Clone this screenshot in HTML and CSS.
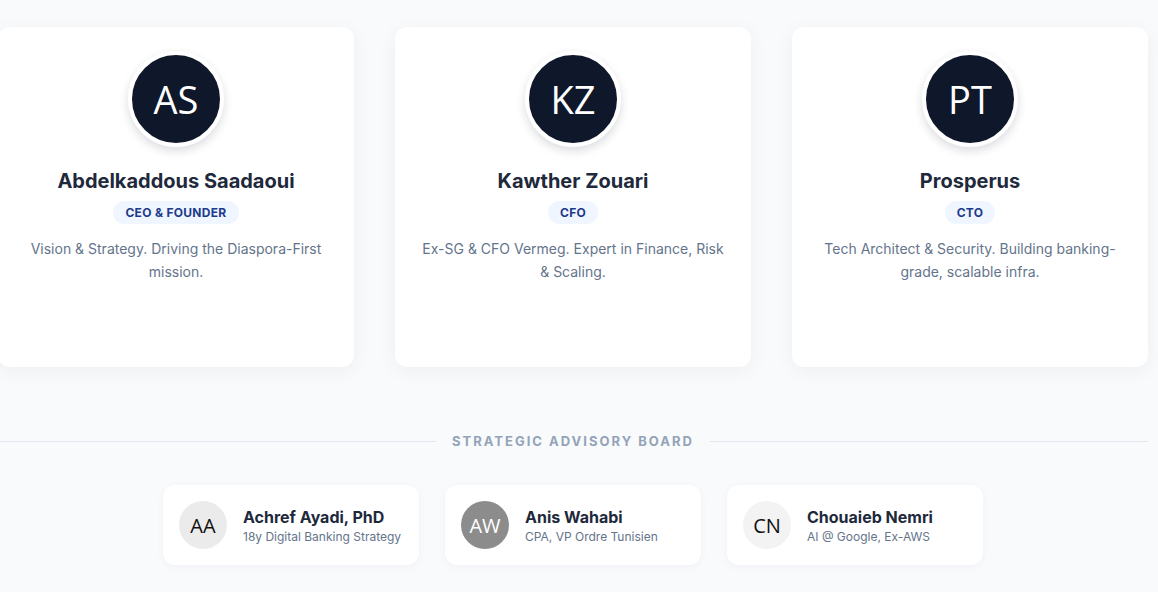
FILE: index.html
```html
<!DOCTYPE html>
<html>
<head>
<meta charset="utf-8">
<link rel="stylesheet" href="styles.css">
</head>
<body>
<main class="team">
  <section class="leaders">
    <article class="card">
      <div class="avatar">AS</div>
      <h3 class="name">Abdelkaddous Saadaoui</h3>
      <span class="badge">CEO &amp; FOUNDER</span>
      <p class="desc">Vision &amp; Strategy. Driving the Diaspora-First mission.</p>
    </article>
    <article class="card">
      <div class="avatar">KZ</div>
      <h3 class="name">Kawther Zouari</h3>
      <span class="badge">CFO</span>
      <p class="desc">Ex-SG &amp; CFO Vermeg. Expert in Finance, Risk &amp; Scaling.</p>
    </article>
    <article class="card">
      <div class="avatar">PT</div>
      <h3 class="name">Prosperus</h3>
      <span class="badge">CTO</span>
      <p class="desc">Tech Architect &amp; Security. Building banking-grade, scalable infra.</p>
    </article>
  </section>

  <div class="divider">
    <span class="line"></span>
    <span class="divider-text">STRATEGIC ADVISORY BOARD</span>
    <span class="line"></span>
  </div>

  <section class="advisors">
    <div class="advisor">
      <div class="mini mini-light">AA</div>
      <div class="info">
        <div class="a-name">Achref Ayadi, PhD</div>
        <div class="a-role">18y Digital Banking Strategy</div>
      </div>
    </div>
    <div class="advisor">
      <div class="mini mini-grey">AW</div>
      <div class="info">
        <div class="a-name">Anis Wahabi</div>
        <div class="a-role">CPA, VP Ordre Tunisien</div>
      </div>
    </div>
    <div class="advisor">
      <div class="mini mini-pale">CN</div>
      <div class="info">
        <div class="a-name">Chouaieb Nemri</div>
        <div class="a-role">AI @ Google, Ex-AWS</div>
      </div>
    </div>
  </section>
</main>
</body>
</html>
```

FILE: styles.css
```css
* { box-sizing: border-box; }
html, body { margin: 0; padding: 0; }
body {
  background: #f8fafc;
  font-family: Inter, "Liberation Sans", sans-serif;
  overflow: hidden;
  height: 592px;
}
.team {
  width: 1150px;
  margin-left: -2px;
  padding-top: 27px;
}
.leaders {
  display: grid;
  grid-template-columns: repeat(3, 1fr);
  gap: 41px;
}
.card {
  background: #ffffff;
  border-radius: 12px;
  height: 340px;
  padding: 24px 24px;
  display: flex;
  flex-direction: column;
  align-items: center;
  box-shadow: 0 4px 20px rgba(15, 23, 42, 0.05);
}
.avatar {
  width: 96px;
  height: 96px;
  border-radius: 50%;
  border: 4px solid #ffffff;
  background: #0f172a;
  color: #ffffff;
  font-family: "Open Sans", "Noto Sans", sans-serif;
  font-size: 38px;
  display: flex;
  align-items: center;
  justify-content: center;
  box-shadow: 0 4px 10px rgba(15, 23, 42, 0.15);
}
.name {
  margin: 20px 0 0;
  font-size: 20px;
  line-height: 28px;
  font-weight: 700;
  color: #1e293b;
}
.badge {
  margin-top: 6px;
  background: #eff6ff;
  color: #1e3a8a;
  font-size: 12px;
  font-weight: 700;
  line-height: 15px;
  padding: 4px 12px;
  border-radius: 999px;
  letter-spacing: 0.3px;
}
.desc {
  margin: 13px 0 0;
  font-size: 14px;
  line-height: 23px;
  color: #64748b;
  text-align: center;
}
.divider {
  display: flex;
  align-items: center;
  gap: 16px;
  margin-top: 65px;
  height: 18px;
}
.line {
  flex: 1;
  height: 1px;
  background: #e2e8f0;
}
.divider-text {
  font-size: 13px;
  font-weight: 700;
  letter-spacing: 2px;
  color: #94a3b8;
  line-height: 18px;
}
.advisors {
  display: flex;
  justify-content: center;
  gap: 26px;
  margin-top: 35px;
}
.advisor {
  width: 256px;
  height: 80px;
  background: #ffffff;
  border-radius: 12px;
  padding: 16px;
  display: flex;
  align-items: center;
  gap: 16px;
  box-shadow: 0 2px 8px rgba(15, 23, 42, 0.04);
}
.mini {
  width: 48px;
  height: 48px;
  border-radius: 50%;
  flex: none;
  display: flex;
  align-items: center;
  justify-content: center;
  font-family: "Open Sans", "Noto Sans", sans-serif;
  font-size: 20px;
}
.mini-light { background: #ebebeb; color: #111111; }
.mini-grey { background: #8c8c8c; color: #ffffff; }
.mini-pale { background: #f3f3f3; color: #111111; }
.info { padding-top: 1px; }
.a-name {
  font-size: 16px;
  font-weight: 700;
  color: #1e293b;
  line-height: 22px;
}
.a-role {
  margin-top: 1px;
  font-size: 12px;
  color: #64748b;
  line-height: 16px;
}
```
